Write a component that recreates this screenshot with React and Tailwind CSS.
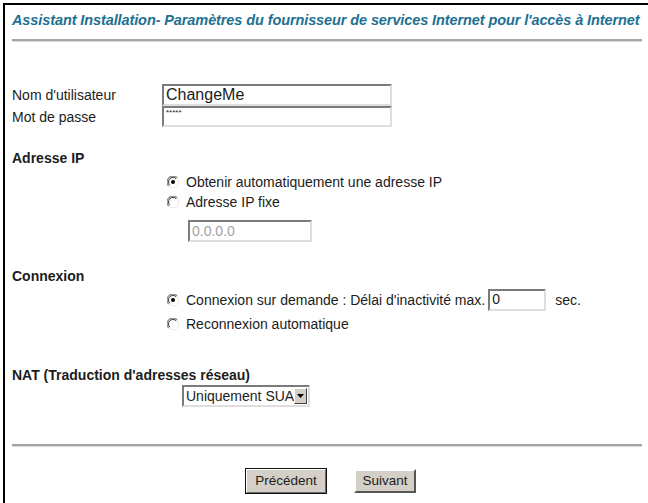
import React from "react";

// classic Windows-style radio button
const Radio = ({ checked }) => (
  <svg width="12" height="12" viewBox="0 0 12 12" className="shrink-0">
    <circle cx="6" cy="6" r="5.5" fill="#fff" />
    <path d="M10.2 1.8 A5.5 5.5 0 0 0 1.8 10.2" fill="none" stroke="#8a8a8a" strokeWidth="1.2" />
    <path d="M9.2 2.8 A4.4 4.4 0 0 0 2.8 9.2" fill="none" stroke="#3a3a3a" strokeWidth="1" />
    <path d="M1.8 10.2 A5.5 5.5 0 0 0 10.2 1.8" fill="none" stroke="#e6e6e6" strokeWidth="1" />
    {checked && <circle cx="6" cy="6" r="2" fill="#000" />}
  </svg>
);

const TextBox = ({ className = "", children }) => (
  <div
    className={
      "flex shrink-0 items-center border-2 border-t-[#7b7b7b] border-l-[#7b7b7b] border-b-[#dedede] border-r-[#dedede] bg-white px-[2px] " +
      className
    }
  >
    {children}
  </div>
);

const Rule = ({ className = "" }) => (
  <div className={"h-[3px] border-t-2 border-t-[#a4a4a4] border-b border-b-[#dcdcdc] " + className} />
);

const App = () => {
  return (
    <div
      className="h-[503px] w-[648px] overflow-hidden bg-white pt-[3px] pl-[3px] text-[14px] leading-[16px] text-[#1c1c1c]"
      style={{ fontFamily: '"Liberation Sans", Arial, sans-serif' }}
    >
      <div className="h-full border-t-2 border-l-2 border-black pl-[7px] pr-[6px]">
        <div className="pt-[6px] text-[14.5px] font-bold italic leading-[18px] tracking-[-0.1px] whitespace-nowrap text-[#1d7092]">
          Assistant Installation- Paramètres du fournisseur de services Internet pour l'accès à Internet
        </div>
        <Rule className="mt-[10px]" />

        {/* compte */}
        <div className="mt-[42px] flex flex-col">
          <div className="flex h-[22px] items-center">
            <span className="w-[150px]">Nom d'utilisateur</span>
            <TextBox className="h-[22px] w-[230px] text-[16px] leading-[18px]">ChangeMe</TextBox>
          </div>
          <div className="flex h-[21px] items-center">
            <span className="w-[150px]">Mot de passe</span>
            <TextBox className="h-[21px] w-[230px] items-start pt-[1px] text-[8px] leading-[8px]">*****</TextBox>
          </div>
        </div>

        {/* adresse IP */}
        <div className="mt-[23px] h-[17px] font-bold leading-[17px]">Adresse IP</div>
        <div className="flex flex-col pl-[155px]">
          <label className="mt-[7px] flex h-[16px] items-center gap-[7px]">
            <Radio checked />
            <span>Obtenir automatiquement une adresse IP</span>
          </label>
          <label className="mt-[4px] flex h-[16px] items-center gap-[7px]">
            <Radio />
            <span>Adresse IP fixe</span>
          </label>
          <TextBox className="mt-[10px] ml-[21px] h-[22px] w-[124px] text-[#a3a3a3]">0.0.0.0</TextBox>
        </div>

        {/* connexion */}
        <div className="mt-[26px] h-[17px] font-bold leading-[17px]">Connexion</div>
        <div className="flex flex-col pl-[155px]">
          <label className="mt-[4px] flex h-[22px] items-center gap-[7px]">
            <Radio checked />
            <span>Connexion sur demande : Délai d'inactivité max.</span>
            <TextBox className="ml-[-4px] h-[22px] w-[58px] items-start text-[14px]">0</TextBox>
            <span className="ml-[2px]">sec.</span>
          </label>
          <label className="mt-[5px] flex h-[16px] items-center gap-[7px]">
            <Radio />
            <span>Reconnexion automatique</span>
          </label>
        </div>

        {/* NAT */}
        <div className="mt-[35px] h-[17px] font-bold leading-[17px]">NAT (Traduction d'adresses réseau)</div>
        <div className="mt-[1px] pl-[170px]">
          <div className="flex h-[22px] w-[128px] items-center border-2 border-t-[#7b7b7b] border-l-[#7b7b7b] border-b-[#dedede] border-r-[#dedede] bg-white">
            <span className="flex-1 pl-[2px] whitespace-nowrap">Uniquement SUA</span>
            <span className="mr-[1px] flex h-[16px] w-[14px] items-center justify-center border border-t-white border-l-white border-b-[#404040] border-r-[#404040] bg-[#d4d0c8]">
              <svg width="7" height="4" viewBox="0 0 7 4">
                <path d="M0 0 H7 L3.5 4 Z" fill="#000" />
              </svg>
            </span>
          </div>
        </div>

        <Rule className="mt-[37px]" />

        <div className="mt-[21px] flex items-start justify-center gap-[27px] pl-[7px]">
          <button className="h-[26px] w-[82px] border border-[#111] bg-[#d4d0c8] text-[13.5px]">
            <span className="flex h-full w-full items-center justify-center border border-t-white border-l-white border-b-[#6a6a6a] border-r-[#6a6a6a]">
              Précédent
            </span>
          </button>
          <button className="mt-[1px] flex h-[24px] w-[62px] items-center justify-center border-2 border-t-white border-l-white border-b-[#555] border-r-[#555] bg-[#d4d0c8] text-[13.5px]">
            Suivant
          </button>
        </div>
      </div>
    </div>
  );
};

export default App;
